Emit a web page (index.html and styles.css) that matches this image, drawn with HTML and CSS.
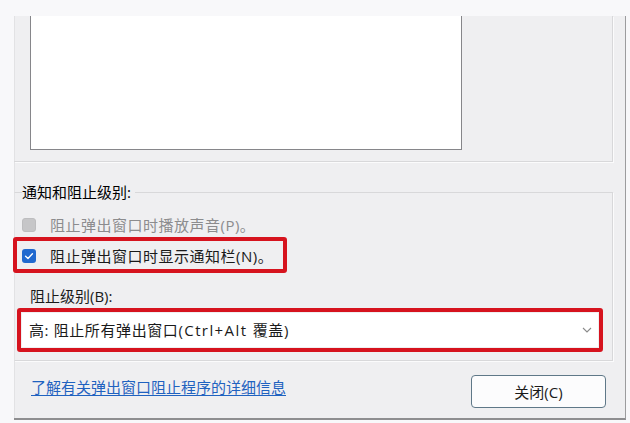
FILE: index.html
```html
<!DOCTYPE html>
<html lang="zh-CN">
<head>
<meta charset="utf-8">
<title>弹出窗口阻止程序设置</title>
<link rel="stylesheet" href="styles.css">
</head>
<body>
<div class="window">
  <div class="group1">
    <div class="listbox"></div>
  </div>
  <fieldset class="group2">
    <legend class="legend">通知和阻止级别:</legend>
    <div class="row disabled">
      <span class="cb cb-off"></span>
      <span class="label">阻止弹出窗口时播放声音(P)。</span>
    </div>
    <div class="row mark">
      <span class="cb cb-on">
        <svg width="14" height="14" viewBox="0 0 14 14"><path d="M3.6 7.2 L6 9.4 L10.4 4.8" fill="none" stroke="#fff" stroke-width="1.4" stroke-linecap="round" stroke-linejoin="round"/></svg>
      </span>
      <span class="label">阻止弹出窗口时显示通知栏(N)。</span>
    </div>
    <div class="level-label">阻止级别(B):</div>
    <div class="select-mark">
      <div class="select">
        <span class="select-text">高: 阻止所有弹出窗口<span class="latin">(Ctrl+Alt </span>覆盖)</span>
        <svg class="chev" width="10" height="6" viewBox="0 0 10 6"><path d="M1 1 L5 5 L9 1" fill="none" stroke="#8a8a8a" stroke-width="1.1"/></svg>
      </div>
    </div>
  </fieldset>
  <div class="footer">
    <a class="link" href="#">了解有关弹出窗口阻止程序的详细信息</a>
    <button class="btn" type="button">关闭(C)</button>
  </div>
</div>
</body>
</html>
```

FILE: styles.css
```css
html, body {
  margin: 0;
  padding: 0;
}
body {
  width: 630px;
  height: 423px;
  background: #f8f8fa;
  font-family: "Open Sans", "Noto Sans CJK SC", sans-serif;
  font-size: 15px;
  color: #1a1a1a;
  overflow: hidden;
}
.window {
  margin: 16px 0 0 14px;
  width: 611px;
  height: 402px;
  background: #efeff1;
  border-right: 1px solid #9c9c9e;
  border-bottom: 2px solid #8e8e90;
  box-shadow: inset 1px 0 0 #e2e2e4;
}
.group1 {
  width: 598px;
  height: 145px;
  border-right: 1px solid #d8d8da;
  border-bottom: 1px solid #d8d8da;
  box-shadow: 1px 1px 0 #fbfbfc;
}
.listbox {
  margin-left: 16px;
  width: 430px;
  height: 133px;
  background: #ffffff;
  border: 1px solid #86868a;
  border-top: none;
}
.group2 {
  margin: 20px 0 0 0;
  width: 590px;
  padding: 0 0 8px 7px;
  border: 1px solid #d8d8da;
  border-left: 1px solid #e2e2e4;
  box-shadow: 1px 1px 0 #fbfbfc;
  min-width: 0;
}
.legend {
  padding: 0 4px 0 0;
  margin-left: 0;
  line-height: 20px;
  color: #000;
}
.row {
  display: flex;
  align-items: center;
  height: 32px;
  margin-top: 7px;
}
.cb {
  width: 14px;
  height: 14px;
  border-radius: 3px;
  flex: none;
  display: flex;
  align-items: center;
  justify-content: center;
}
.cb-off {
  background: #c6c6c8;
  border: 1px solid #bdbdbf;
  width: 12px;
  height: 12px;
}
.cb-on {
  background: #2169cf;
}
.label {
  margin-left: 14px;
  line-height: 20px;
  letter-spacing: 0.5px;
}
.disabled .label {
  color: #8c8c8e;
}
.row.mark {
  margin-top: -4px;
  margin-left: -9px;
  width: 261px;
  height: 26px;
  padding-left: 5px;
  padding-top: 2px;
  border: 4px solid #d6131e;
  border-radius: 3px;
}
.level-label {
  margin-top: 11px;
  margin-left: 8px;
  line-height: 24px;
  height: 24px;
}
.select-mark {
  margin-left: -5px;
  width: 578px;
  height: 36px;
  border: 4px solid #d6131e;
  border-radius: 3px;
}
.select {
  height: 34px;
  margin: 1px;
  background: #ffffff;
  display: flex;
  align-items: center;
  justify-content: space-between;
  padding: 0 6px 0 7px;
}
.select-text {
  line-height: 20px;
  letter-spacing: 0.6px;
}
.latin {
  letter-spacing: 1.4px;
}
.chev {
  flex: none;
}
.footer {
  display: flex;
  justify-content: space-between;
  align-items: flex-start;
  margin-top: 14px;
  padding: 0 19px 0 17px;
}
.link {
  margin-top: 2px;
  line-height: 20px;
  color: #1f62c0;
  text-decoration: underline;
  text-underline-offset: 2px;
}
.btn {
  width: 135px;
  height: 33px;
  border: 1px solid #5f7888;
  border-radius: 4px;
  background: #fcfcfd;
  font-family: inherit;
  font-size: 15px;
  color: #1a1a1a;
  padding: 0;
}
```
